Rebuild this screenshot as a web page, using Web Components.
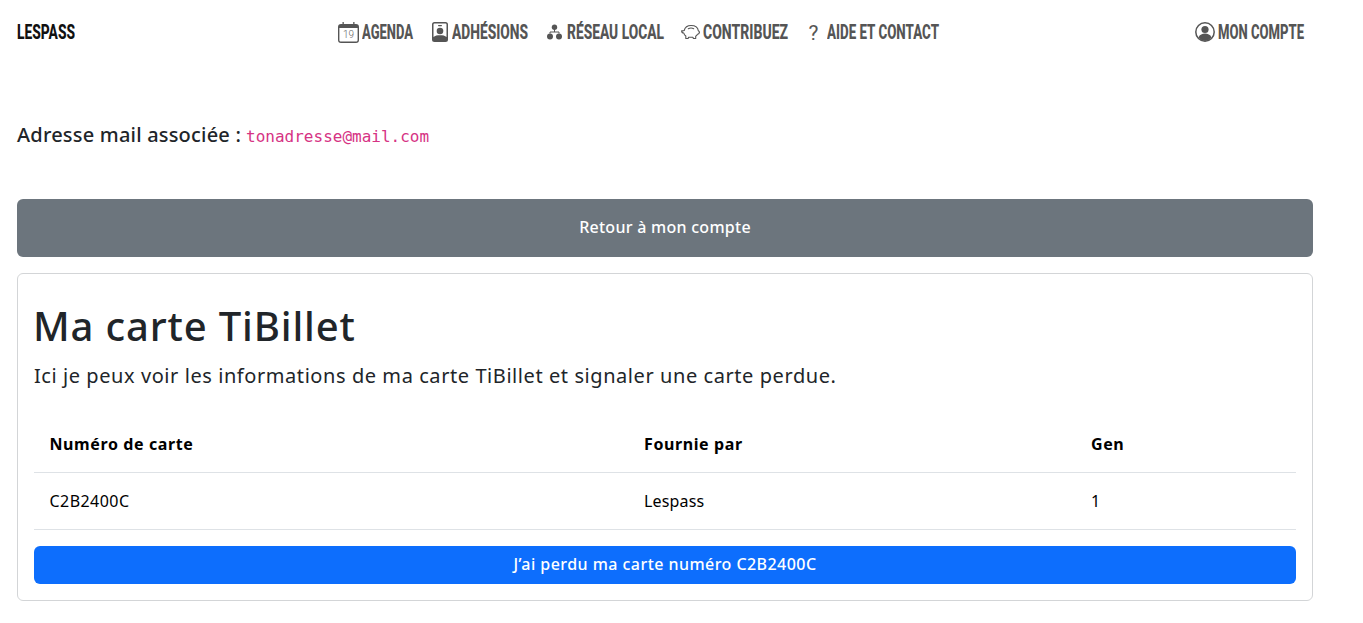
<!DOCTYPE html>
<html lang="fr">
<head>
<meta charset="utf-8">
<title>Lespass</title>
<style>
  html, body { margin: 0; background: #fff; }
  body { font-family: "Noto Sans", sans-serif; color: #212529; }
</style>
</head>
<body>
<template id="fit-text-tpl">
  <style>
    :host { display: inline-block; white-space: nowrap; }
    span { display: inline-block; transform-origin: left center; }
  </style>
  <span><slot></slot></span>
</template>

<template id="nav-link-tpl">
  <style>
    :host { display: inline-flex; align-items: center; gap: var(--gap, 3px); color: #555; }
    .ico { display: flex; align-items: center; justify-content: center; height: 22px; }
  </style>
  <div class="ico"><slot name="icon"></slot></div>
  <slot></slot>
</template>

<template id="site-nav-tpl">
  <style>
    :host {
      display: flex; align-items: center; height: 64px; padding: 0 59px 0 17px;
      font-family: "Roboto", "Liberation Sans", sans-serif; font-weight: 800; font-size: 19.500px;
    }
    .brand { color: #111; width: 321px; }
    .links { flex: 1; display: flex; gap: 19px; }
  </style>
  <div class="brand"><slot name="brand"></slot></div>
  <div class="links"><slot></slot></div>
  <slot name="end"></slot>
</template>

<template id="mail-line-tpl">
  <style>
    :host { display: flex; align-items: baseline; padding: 59px 17px 0; height: 76px; font-size: 20px; line-height: 24px; font-weight: 500; letter-spacing: 0.2px; }
    code { font-family: "DejaVu Sans Mono", "Liberation Mono", monospace; font-size: 16px; font-weight: 400; letter-spacing: 0; color: #d63384; margin-left: 5px; }
  </style>
  <span>Adresse mail associée :</span><code><slot></slot></code>
</template>

<template id="btn-tpl">
  <style>
    :host { display: flex; align-items: center; justify-content: center; padding-bottom: 2px; box-sizing: border-box; color: #fff; font-size: 16px; font-weight: 500; letter-spacing: var(--ls, 0.27px); border-radius: 6px; background: var(--bg, #6c757d); height: var(--h, 58px); }
  </style>
  <slot></slot>
</template>

<template id="card-tpl">
  <style>
    :host { display: block; margin: 16px 50px 0 17px; padding: 16px; border: 1px solid #d3d5d7; border-radius: 6px; box-sizing: border-box; height: 328px; }
    h1 { margin: 12px 0 0 -1px; font-size: 40px; font-weight: 500; line-height: 48px; letter-spacing: 0.85px; }
    p { margin: 11px 0 0; font-size: 20px; line-height: 30px; letter-spacing: 0.57px; }
    .slot { margin-top: 25px; }
  </style>
  <h1><slot name="title"></slot></h1>
  <p><slot name="lead"></slot></p>
  <div class="slot"><slot></slot></div>
</template>

<template id="card-table-tpl">
  <style>
    :host { display: block; margin-bottom: 16px; font-size: 16px; color: #000; letter-spacing: 0.45px; }
    .row { display: grid; grid-template-columns: 594.500px 447px 1fr; border-bottom: 1px solid #dee2e6; height: 57px; align-items: center; box-sizing: border-box; }
    .row div { padding-left: 15.500px; }
    .head { font-weight: 700; letter-spacing: 0.6px; height: 57px; }
    .short { letter-spacing: 0.15px; }
  </style>
  <div class="row head"><div>Numéro de carte</div><div>Fournie par</div><div>Gen</div></div>
  <div class="row"><div>C2B2400C</div><div class="short">Lespass</div><div>1</div></div>
</template>

<site-nav>
  <fit-text slot="brand" w="58">LESPASS</fit-text>
  <nav-link>
    <svg slot="icon" width="21" height="21" viewBox="0 0 21 21"><path fill="#555" fill-rule="evenodd" d="M4.500 0h1.300v2h9.400V0h1.300v2H18a3 3 0 0 1 3 3v13a3 3 0 0 1-3 3H3a3 3 0 0 1-3-3V5a3 3 0 0 1 3-3h1.500zM1.400 6V18c0 .9.700 1.600 1.600 1.600h15c.9 0 1.600-.7 1.600-1.600V6z"/><text x="10.500" y="16.300" text-anchor="middle" font-size="10" font-family="Roboto" font-weight="300" fill="#666">19</text></svg>
    <fit-text w="51">AGENDA</fit-text>
  </nav-link>
  <nav-link style="--gap:4px">
    <svg slot="icon" width="16" height="20" viewBox="0 0 16 20"><path fill="#555" fill-rule="evenodd" d="M2.500 0h11A2.500 2.500 0 0 1 16 2.500v15a2.500 2.500 0 0 1-2.500 2.500h-11A2.500 2.500 0 0 1 0 17.500v-15A2.500 2.500 0 0 1 2.500 0zM1.500 2.500V15c1.500-1.400 3.800-1.800 6.500-1.800s5 .4 6.500 1.800V2.500a1 1 0 0 0-1-1h-11a1 1 0 0 0-1 1z"/><rect x="6" y="3" width="4" height="1.200" rx=".6" fill="#555"/><circle cx="8" cy="9" r="3.300" fill="#555"/></svg>
    <fit-text w="76">ADHÉSIONS</fit-text>
  </nav-link>
  <nav-link style="--gap:5px">
    <svg slot="icon" width="15" height="16" viewBox="0 0 15 16"><g fill="#555"><circle cx="7.500" cy="3.200" r="2.700"/><circle cx="3" cy="12.500" r="3"/><circle cx="12" cy="12.500" r="3"/></g><path fill="none" stroke="#555" d="M7.500 5v3M3 9.500V8h9v1.500"/></svg>
    <fit-text w="97">RÉSEAU LOCAL</fit-text>
  </nav-link>
  <nav-link style="margin-left:-2px">
    <svg slot="icon" width="19" height="17" viewBox="0 0 19 16"><g fill="none" stroke="#555" stroke-width="1.100" stroke-linejoin="round" stroke-linecap="round"><path d="M3.200 6C4 2.800 6.800 1 10 1c4 0 7 2 7.300 5.200.9.400 1.200 1.200 1.100 2-.2 1-1 1.500-1.900 1.500-.4.800-1 1.500-1.800 2V14h-2.300l-.5-1.200H7.600L7.100 14H4.800v-2.500C3.600 10.700 3 9.600 2.800 8.500 1.500 8.500.6 7.400.6 6.200c.9.300 1.700.2 2.600-.2z"/><path d="M7.300 4.200c1.700-.8 3.700-.8 5.400 0"/></g></svg>
    <fit-text w="85">CONTRIBUEZ</fit-text>
  </nav-link>
  <nav-link style="--gap:7px">
    <span slot="icon" style="font-size:21px;font-weight:400;width:13px;text-align:center;padding-top:1px">?</span>
    <fit-text w="112">AIDE ET CONTACT</fit-text>
  </nav-link>
  <nav-link slot="end">
    <svg slot="icon" width="20" height="20" viewBox="0 0 20 20"><circle cx="10" cy="10" r="9.200" fill="none" stroke="#555" stroke-width="1.500"/><circle cx="10" cy="7.500" r="3.600" fill="#555"/><path fill="#555" d="M3.500 15.500c1-3 4-4 6.500-4s5.500 1 6.500 4A9 9 0 0 1 10 19a9 9 0 0 1-6.500-3.500z"/></svg>
    <fit-text w="86">MON COMPTE</fit-text>
  </nav-link>
</site-nav>

<mail-line>tonadresse@mail.com</mail-line>

<action-btn style="margin:0 50px 0 17px">Retour à mon compte</action-btn>

<info-card>
  <span slot="title">Ma carte TiBillet</span>
  <span slot="lead">Ici je peux voir les informations de ma carte TiBillet et signaler une carte perdue.</span>
  <card-table></card-table>
  <action-btn style="--bg:#0d6efd;--h:38px;--ls:0.45px">J’ai perdu ma carte numéro C2B2400C</action-btn>
</info-card>

<script>
function simple(name, tplId) {
  customElements.define(name, class extends HTMLElement {
    constructor() {
      super();
      this.attachShadow({ mode: "open" });
      this.shadowRoot.appendChild(document.getElementById(tplId).content.cloneNode(true));
    }
  });
}
simple("nav-link", "nav-link-tpl");
simple("site-nav", "site-nav-tpl");
simple("mail-line", "mail-line-tpl");
simple("action-btn", "btn-tpl");
simple("info-card", "card-tpl");
simple("card-table", "card-table-tpl");

// the nav font is a very narrow one: squeeze Roboto down to the wanted width
class FitText extends HTMLElement {
  constructor() {
    super();
    this.attachShadow({ mode: "open" });
    this.shadowRoot.appendChild(document.getElementById("fit-text-tpl").content.cloneNode(true));
  }
  connectedCallback() {
    const w = Number(this.getAttribute("w"));
    const span = this.shadowRoot.querySelector("span");
    span.style.transform = "scaleX(" + w / span.getBoundingClientRect().width + ")";
    this.style.width = w + "px";
  }
}
customElements.define("fit-text", FitText);
</script>
</body>
</html>
